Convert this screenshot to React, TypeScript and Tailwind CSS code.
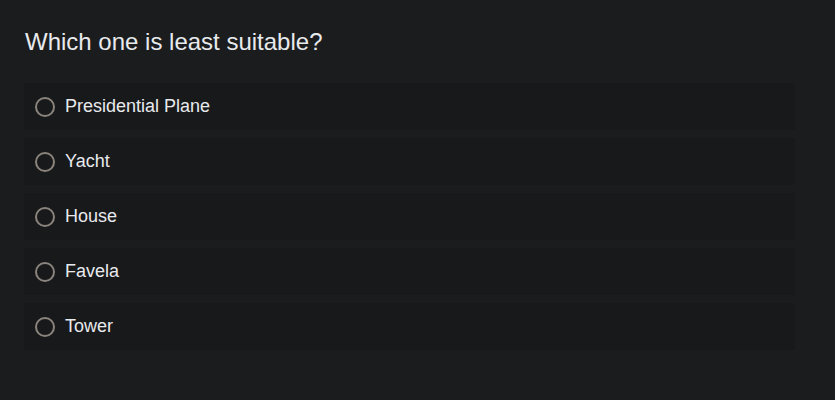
const options = ["Presidential Plane", "Yacht", "House", "Favela", "Tower"];

export default function App() {
  return (
    <div
      className="h-[400px] w-[835px] bg-[#1b1c1e] px-6 pt-[27px]"
      style={{ fontFamily: '"Liberation Sans", Arial, sans-serif' }}
    >
      <h1 className="pl-px text-[24px] leading-[30px] text-[#e8eaed]">
        Which one is least suitable?
      </h1>
      <ul className="mt-[26px] flex w-[771px] flex-col gap-2">
        {options.map((o) => (
          <li
            key={o}
            className="flex h-[47px] items-center gap-[10px] bg-[#18191b] pl-[11px]"
          >
            <span className="h-5 w-5 rounded-full border-2 border-[#8a847c]" />
            <span className="text-[18px] text-[#e8eaed]">{o}</span>
          </li>
        ))}
      </ul>
    </div>
  );
}
